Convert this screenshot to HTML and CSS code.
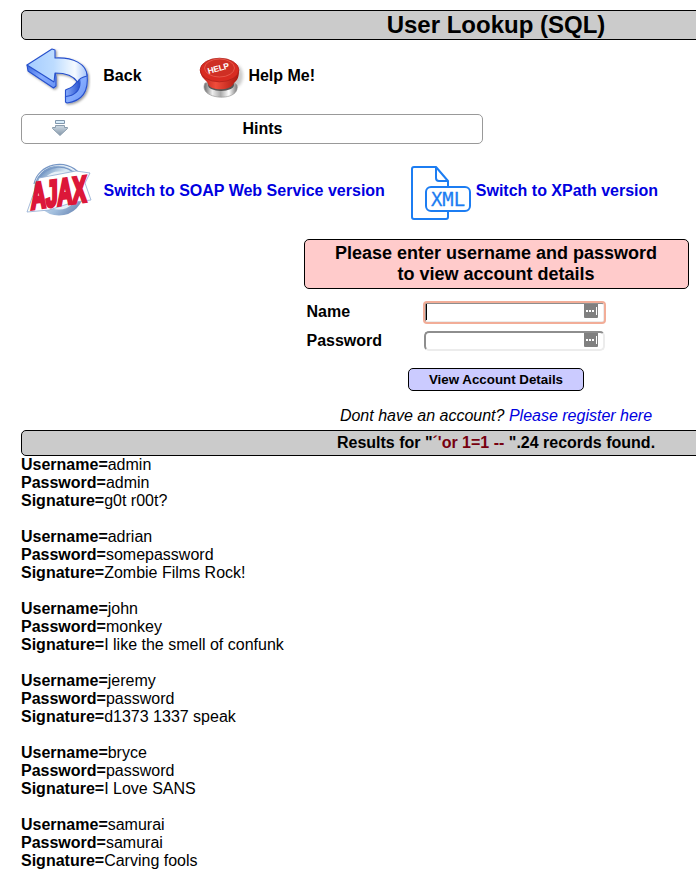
FILE: index.html
```html
<!DOCTYPE html>
<html lang="en">
<head>
<meta charset="utf-8">
<title>User Lookup (SQL)</title>
<link rel="stylesheet" href="styles.css">
</head>
<body>
<main class="page">
  <h1 class="title">User Lookup (SQL)</h1>
  <nav class="nav">
    <a class="back"><svg class="back-icon" width="70" height="62" viewBox="0 0 70 62">
      <defs>
        <linearGradient id="top" x1="0" y1="0" x2="1" y2="0"><stop offset="0" stop-color="#a5ccff"/><stop offset=".45" stop-color="#bddcff"/><stop offset=".8" stop-color="#f5faff"/><stop offset="1" stop-color="#a4c4fa"/></linearGradient>
        <linearGradient id="side" x1="0" y1="0" x2="1" y2="1"><stop offset="0" stop-color="#3c68e0"/><stop offset=".5" stop-color="#86adff"/><stop offset="1" stop-color="#6691f4"/></linearGradient>
        <linearGradient id="inner" x1="0" y1="0" x2="1" y2="0"><stop offset="0" stop-color="#8baffb"/><stop offset="1" stop-color="#2852d0"/></linearGradient>
        <filter id="shadow"><feDropShadow dx="1.3" dy="1.3" stdDeviation="1" flood-opacity=".4"/></filter>
      </defs>
      <g filter="url(#shadow)" stroke="#2750cc" stroke-width="1.1" stroke-linejoin="round">
        <path fill="url(#inner)" d="M57 35C53 42 49 43 44.500 45V53L50 53C58 49 61 42 57 35Z"/>
        <path fill="url(#side)" d="M6 20L7 26L32.500 43L35 41V32L33 20Z"/>
        <path fill="url(#side)" d="M44.500 51.500C54 51 59 45 59 38C59 35 58 33 56 31.500L66 29C68 46 61 56 46 58L44.500 57Z"/>
        <path fill="url(#top)" d="M6 20L31 4L34 5V13C52 12 66 19 66 31C61 32 58 34 56.500 37C52 30 44 28 34 28L33 37Z"/>
      </g>
    </svg><span>Back</span></a>
    <a class="help"><svg width="50" height="46" viewBox="0 0 50 46">
      <defs>
        <linearGradient id="metal"><stop offset="0" stop-color="#666"/><stop offset=".25" stop-color="#eee"/><stop offset=".5" stop-color="#aaa"/><stop offset=".75" stop-color="#fff"/><stop offset="1" stop-color="#777"/></linearGradient>
        <linearGradient id="red" x1="0" x2="1"><stop offset="0" stop-color="#b61914"/><stop offset=".4" stop-color="#ef4d3b"/><stop offset="1" stop-color="#ab160f"/></linearGradient>
        <filter id="soft"><feGaussianBlur stdDeviation="1.5"/></filter>
      </defs>
      <ellipse cx="39" cy="21" rx="7" ry="11" fill="#aaa" opacity=".6" filter="url(#soft)"/>
      <path d="M8 28C0 45 44 48 40 30L34 25Z" fill="url(#metal)" stroke="#999" stroke-width=".7"/>
      <ellipse cx="24" cy="30" rx="13" ry="6" fill="#555"/>
      <path d="M3.200 15C3 23 10 25 11 29C13 36 34 36.500 37 28C41 25 42 21 42 15Z" fill="url(#red)"/>
      <ellipse cx="22.500" cy="15" rx="19.400" ry="11.800" fill="#d82b21" stroke="#ad211a" stroke-width=".8"/>
      <ellipse cx="22.500" cy="13" rx="15" ry="9" fill="#cf2f24" stroke="#ee6557" stroke-width=".7"/>
      <text class="help-word" x="11.500" y="19" transform="rotate(-15 11.500 19)" textLength="22">HELP</text>
    </svg><span>Help Me!</span></a>
  </nav>
  <div class="hints"><svg class="down" width="16" height="16" viewBox="0 0 16 16">
    <defs><linearGradient id="steel" x1="0" x2="0" y1="0" y2="1"><stop offset="0" stop-color="#cfdbe5"/><stop offset="1" stop-color="#8496a8"/></linearGradient></defs>
    <path d="M3.500.5h9v3h-9z" fill="#d9edfa" stroke="#8097ad"/><path d="M3.500 5.500h9v2h3v1L8 15.500.5 8.500v-1h3z" fill="url(#steel)" stroke="#8a9dae"/>
  </svg><span>Hints</span></div>
  <nav class="switches">
    <a class="soap"><svg width="74" height="60" viewBox="0 0 74 60">
      <defs><linearGradient id="ring" x1="0" y1="0" x2="1" y2="1"><stop offset="0" stop-color="#4775ae"/><stop offset=".35" stop-color="#dcebf6"/><stop offset=".7" stop-color="#9fbcdc"/><stop offset="1" stop-color="#637fae"/></linearGradient></defs>
      <circle cx="38" cy="29.500" r="22" fill="#e6f0f7" stroke="url(#ring)" stroke-width="6"/>
      <path d="M13 23C17 3 45-4 59 13M18 17C28 3 46 3 55 14" fill="none" stroke="#7898c6" stroke-width="1.200"/>
      <path d="M18 17L55 10L69 12L64 22L70 39L53 41L28 49L6 51Z" fill="#fff" stroke="#8eaad0" stroke-width=".8"/>
      <text class="ajax" transform="translate(10 48) rotate(-8) skewX(-8) scale(1 1.450)" textLength="56" lengthAdjust="spacingAndGlyphs">AJAX</text>
    </svg><span>Switch to SOAP Web Service version</span></a>
    <a class="xpath"><svg width="62" height="56" viewBox="0 0 62 56" fill="none" stroke="#1c7df2" stroke-width="2" stroke-linejoin="round">
      <path d="M38 22V16L26 2H4Q2 2 2 4V52Q2 54 4 54H36Q38 54 38 52V46M26 2V13Q26 16 29 16H38"/>
      <rect x="16" y="22" width="44" height="24" rx="5"/><text class="xml" x="21" y="41" textLength="34" lengthAdjust="spacingAndGlyphs">XML</text>
    </svg><span>Switch to XPath version</span></a>
  </nav>
  <form class="login">
    <div class="prompt">Please enter username and password<br>to view account details</div>
    <div class="field"><label>Name</label><div class="input focused"><i class="caret"></i><svg class="key" width="14" height="14"><path fill="#fff" d="M2 6h2v2H2zM5 6h2v2H5zM8 6h2v2H8zM12 3h1v8h-1z"/></svg></div></div>
    <div class="field second"><label>Password</label><div class="input"><svg class="key" width="14" height="14"><path fill="#fff" d="M2 6h2v2H2zM5 6h2v2H5zM8 6h2v2H8zM12 3h1v8h-1z"/></svg></div></div>
    <button type="button" class="submit">View Account Details</button>
    <p class="register">Dont have an account? <a>Please register here</a></p>
  </form>
  <div class="summary">Results for "<span class="query">´'or 1=1 -- </span>".24 records found.</div>
  <section class="results">
    <p><b>Username=</b>admin<br><b>Password=</b>admin<br><b>Signature=</b>g0t r00t?</p>
    <p><b>Username=</b>adrian<br><b>Password=</b>somepassword<br><b>Signature=</b>Zombie Films Rock!</p>
    <p><b>Username=</b>john<br><b>Password=</b>monkey<br><b>Signature=</b>I like the smell of confunk</p>
    <p><b>Username=</b>jeremy<br><b>Password=</b>password<br><b>Signature=</b>d1373 1337 speak</p>
    <p><b>Username=</b>bryce<br><b>Password=</b>password<br><b>Signature=</b>I Love SANS</p>
    <p><b>Username=</b>samurai<br><b>Password=</b>samurai<br><b>Signature=</b>Carving fools</p>
  </section>
</main>
</body>
</html>
```
FILE: styles.css
```css
* { box-sizing: border-box; }
html { overflow: hidden; }
body { margin: 0; height: 884px; overflow: hidden; background: #fff; color: #000; font: 16px/18px "Liberation Sans", Arial, sans-serif; }
.page { width: 950px; margin-left: 21px; padding-top: 10px; }
.title, .summary { border: 1px solid #000; border-radius: 5px; background: #cbcbcb; text-align: center; font-weight: bold; }
.title { height: 30px; margin: 0; font-size: 24px; line-height: 28px; }
.nav { display: flex; height: 74px; font-weight: bold; }
.nav a { display: flex; align-items: center; height: 71px; }
.back { width: 176px; }
.back-icon { margin-right: 12.3px; }
.help svg { margin-right: 1.4px; margin-top: 5px; }
.help-word { font: bold 8.5px "Liberation Sans", sans-serif; fill: #fff; }
.hints { position: relative; width: 462px; height: 30px; padding-left: 21px; border: 1px solid #999; border-radius: 5px; text-align: center; font-weight: bold; line-height: 28px; }
.down { position: absolute; left: 30px; top: 5px; }
.switches { display: flex; height: 95px; color: #0000e0; font-weight: bold; }
.switches a { display: flex; align-items: center; height: 93px; white-space: nowrap; }
.soap { width: 389px; }
.soap svg { margin-right: 8.6px; overflow: visible; }
.xpath svg { margin-right: 3.8px; margin-top: 4px; }
.ajax { font: bold 25px "Liberation Sans", sans-serif; fill: #dc1739; stroke: #dc1739; stroke-width: 2.4px; }
.xml { font: 20px "DejaVu Sans Mono", monospace; fill: #1c7df2; stroke: #1c7df2; stroke-width: .3px; }
.login { width: 385px; margin: 0 auto; }
.prompt { height: 50px; border: 1px solid #000; border-radius: 5px; background: #ffcbcb; text-align: center; font-size: 18px; font-weight: bold; line-height: 21px; padding-top: 3px; }
.field { display: flex; align-items: center; height: 20px; margin: 13px 0 0 3px; font-weight: bold; }
.field.second { margin-top: 9px; }
.field label { width: 117.5px; }
.input { display: flex; align-items: flex-start; justify-content: flex-end; width: 181px; height: 20px; padding-right: 5px; border: 2px solid; border-color: #8e8e8e #ececec #ececec #8e8e8e; border-radius: 5px; }
.focused { height: 21px; outline: 2px solid #f2ad98; outline-offset: -1px; border-radius: 3px; }
.caret { width: 1px; height: 16px; margin-right: auto; background: #000; }
.key { background: #808080; border-radius: 0 0 1px 1px; }
.submit { display: block; width: 176px; height: 23px; margin: 17px auto 0; padding: 0; border: 1px solid #000; border-radius: 5px; background: #cbcbff; color: #000; font: bold 13.333px "Liberation Sans", Arial, sans-serif; }
.register { margin: 16px 0 5px; text-align: center; font-style: italic; }
.register a { color: #0000e0; }
.summary { height: 26px; line-height: 24px; }
.query { color: #770010; white-space: pre; }
.results p { margin: 0 0 18px; }
```
